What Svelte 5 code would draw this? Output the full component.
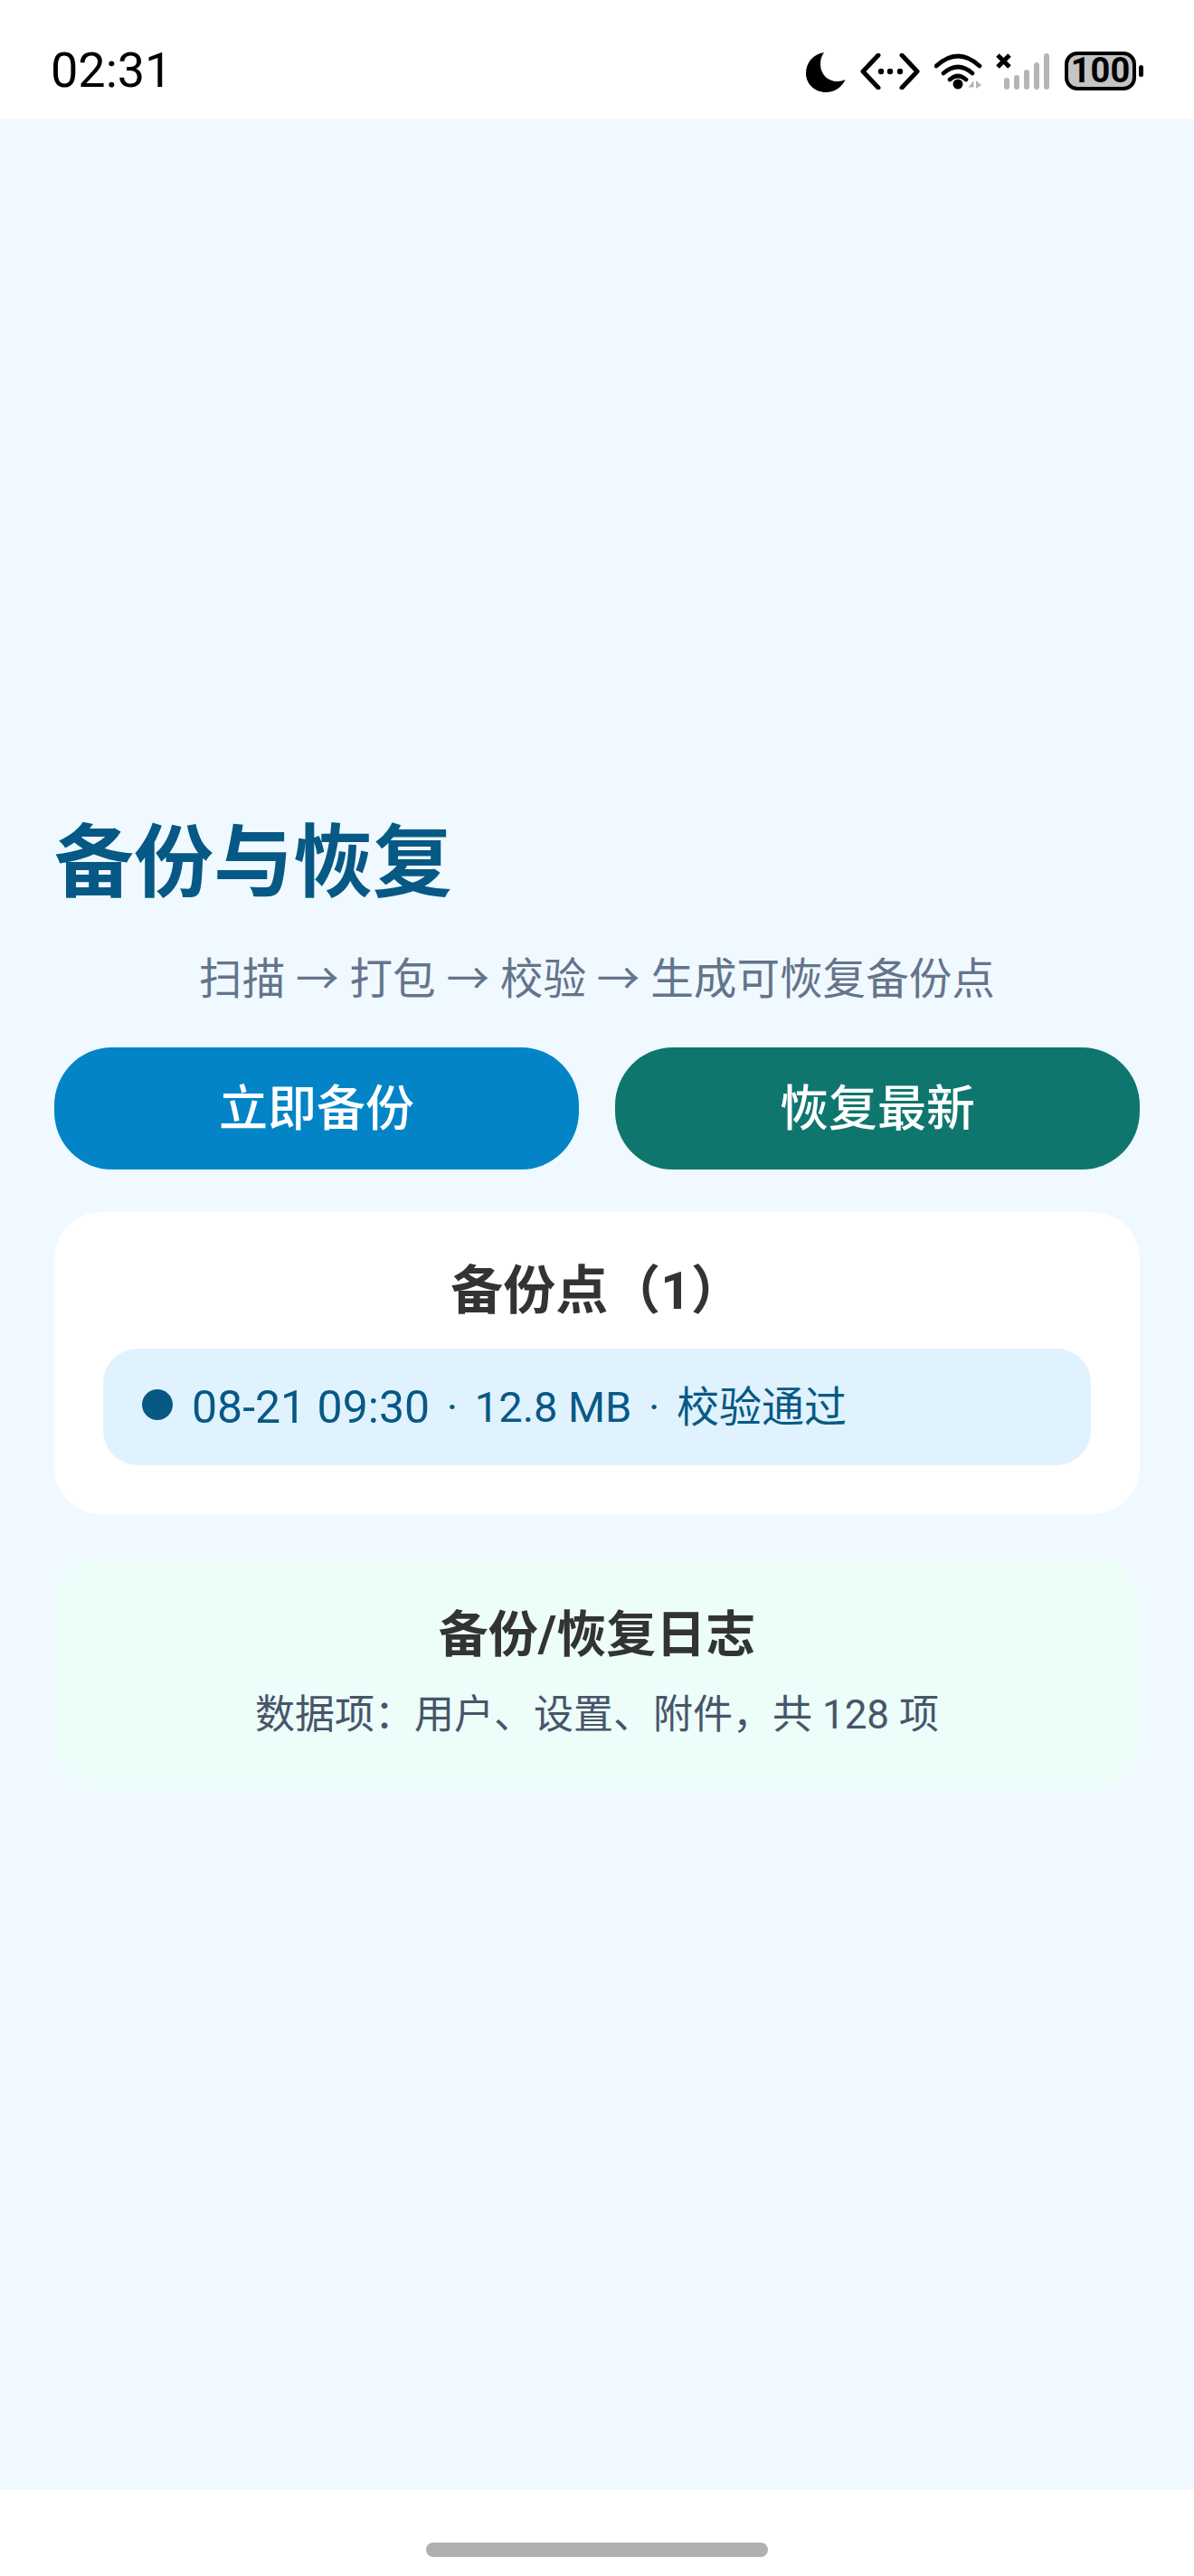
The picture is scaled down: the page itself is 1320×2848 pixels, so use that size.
<script>
  let points = [{ time: '08-21 09:30', size: '12.8 MB', state: '校验通过' }];
</script>

<div class="page">
  <header class="status">
    <span class="time">02:31</span>
    <div class="icons">
      <svg class="moon" width="44" height="46" viewBox="0 0 44 46">
        <path d="M20 1C8 3 0 12 0 24C0 36 10 45 22 45C32 45 40 39 43.5 31C41 32 38 33 35 33C24 33 16 25 16 14C16 9 17 5 20 1Z" fill="#000" />
      </svg>
      <svg width="66" height="40" viewBox="0 0 66 40">
        <path d="M20 2 3 20 20 38M46 2 63 20 46 38" fill="none" stroke="#000" stroke-width="5" stroke-linecap="round" stroke-linejoin="round" />
        <circle cx="23" cy="20" r="3.2" />
        <circle cx="33" cy="20" r="3.2" />
        <circle cx="44" cy="20" r="3.2" />
      </svg>
      <svg class="wifi" width="54" height="40" viewBox="0 0 54 40">
        <path d="M2 14Q26 -8 50 14M10 22Q26 8 42 22M17 29Q26 21 35 29" fill="none" stroke="#000" stroke-width="4.6" stroke-linecap="round" />
        <circle cx="26" cy="34" r="5.5" />
        <path d="M43.5 30 37.5 37.5H43.5ZM46 30V39L52 35Z" fill="#b5b5b5" />
      </svg>
      <svg width="60" height="40" viewBox="0 0 60 40">
        <path d="M2 2 15 15M15 2 2 15" stroke="#000" stroke-width="5" />
        <g fill="#b5b5b5">
          <rect x="9" y="27" width="6" height="13" rx="3" />
          <rect x="20" y="24" width="6" height="16" rx="3" />
          <rect x="31" y="18" width="6" height="22" rx="3" />
          <rect x="42" y="10" width="6" height="30" rx="3" />
          <rect x="53" y="0" width="6" height="40" rx="3" />
        </g>
      </svg>
      <div class="battery">
        <span class="level">100</span>
        <span class="nub"></span>
      </div>
    </div>
  </header>

  <main>
    <h1>备份与恢复</h1>
    <p class="subtitle">扫描 → 打包 → 校验 → 生成可恢复备份点</p>

    <div class="actions">
      <button class="btn backup">立即备份</button>
      <button class="btn restore">恢复最新</button>
    </div>

    <section class="card points">
      <h2>备份点（{points.length}）</h2>
      {#each points as point}
        <div class="point">
          <span class="dot"></span>
          <span class="stamp">{point.time}</span>
          <span class="sep">·</span>
          <span>{point.size}</span>
          <span class="sep">·</span>
          <span>{point.state}</span>
        </div>
      {/each}
    </section>

    <section class="card log">
      <h2>备份/恢复日志</h2>
      <p>数据项：用户、设置、附件，共 128 项</p>
    </section>
  </main>

  <footer class="nav">
    <span class="handle"></span>
  </footer>
</div>

<style>
  :global(body) {
    margin: 0;
    background: #fff;
  }

  .page {
    display: flex;
    flex-direction: column;
    height: 2848px;
    font-family: Roboto, "Noto Sans CJK SC", sans-serif;
  }

  .status {
    height: 131px;
    flex: none;
    box-sizing: border-box;
    display: flex;
    justify-content: space-between;
    align-items: flex-start;
    padding: 57px 56px 0 56px;
    background: #fff;
  }

  .time {
    font-size: 54px;
    line-height: 42px;
    color: #000;
  }

  .icons {
    display: flex;
    gap: 16px;
    align-items: flex-start;
  }

  .icons svg {
    display: block;
    margin-top: 2px;
  }

  .icons .moon {
    margin-top: 0;
  }

  .icons .wifi {
    margin-right: -2px;
  }

  .battery {
    display: flex;
    align-items: center;
    gap: 3px;
  }

  .level {
    box-sizing: border-box;
    width: 79px;
    height: 43px;
    border: 4px solid #000;
    border-radius: 14px;
    background: #c4c4c4;
    font-size: 38px;
    font-weight: 700;
    line-height: 35px;
    text-align: center;
    color: #000;
  }

  .nub {
    width: 5px;
    height: 13px;
    border-radius: 3px;
    background: #000;
  }

  main {
    flex: 1;
    box-sizing: border-box;
    padding: 763px 60px 0 60px;
    background: #f0f9ff;
  }

  h1 {
    margin: 0;
    font-size: 88px;
    font-weight: 700;
    line-height: 120px;
    color: #075985;
  }

  .subtitle {
    margin: 37px 0 0;
    font-size: 47.6px;
    line-height: 64px;
    text-align: center;
    color: #64748b;
  }

  .actions {
    display: flex;
    gap: 40px;
    margin-top: 43px;
  }

  .btn {
    flex: 1;
    height: 135px;
    padding: 0 0 8px;
    border: none;
    border-radius: 64px;
    font-family: inherit;
    font-size: 54px;
    font-weight: 500;
    color: #fff;
  }

  .backup {
    background: #0284c7;
  }

  .restore {
    background: #0f766e;
  }

  .card {
    border-radius: 52px;
    text-align: center;
  }

  .card h2 {
    margin: 0;
    font-size: 58px;
    font-weight: 700;
    line-height: 66px;
    color: #333;
  }

  .points {
    margin-top: 47px;
    padding: 54px;
    background: #fff;
  }

  .point {
    display: flex;
    align-items: center;
    height: 129px;
    margin-top: 31px;
    padding-left: 43px;
    border-radius: 38px;
    background: #e0f2fe;
    font-size: 47px;
    line-height: 56px;
    color: #075985;
  }

  .dot {
    width: 34px;
    height: 34px;
    margin: 0 21px 6px 0;
    border-radius: 50%;
    background: #075985;
  }

  .stamp {
    font-size: 50px;
  }

  .sep {
    margin: 0 18.7px;
  }

  .log {
    margin-top: 46px;
    padding: 54px 54px 56px;
    background: #ecfdfa;
  }

  .card.log h2 {
    font-size: 55px;
  }

  .log p {
    margin: 28px 0 0;
    font-size: 44px;
    line-height: 56px;
    color: #475569;
  }

  .nav {
    height: 95px;
    flex: none;
    display: flex;
    justify-content: center;
    background: #fff;
  }

  .handle {
    width: 378px;
    height: 16px;
    margin-top: 58px;
    border-radius: 8px;
    background: #b0b0b0;
  }
</style>
